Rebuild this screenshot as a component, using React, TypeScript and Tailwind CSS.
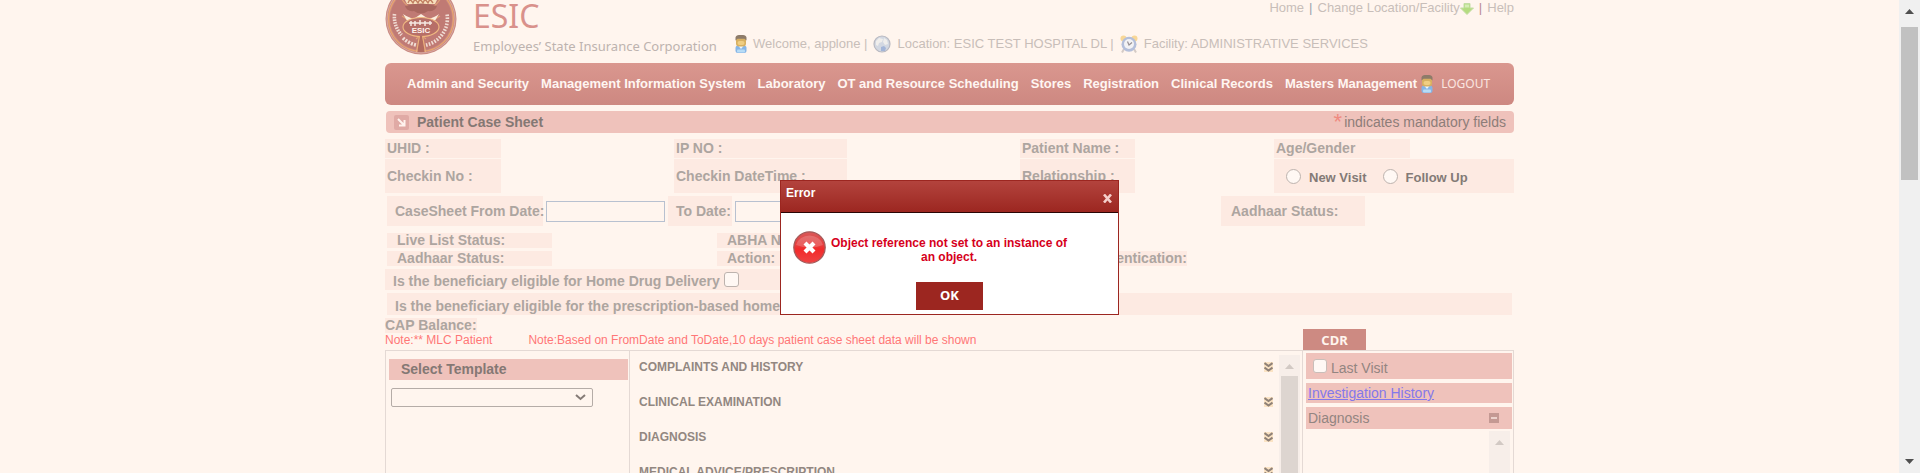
import React from "react";

function Emblem() {
  return (
    <svg className="block h-[55px] w-[72px] shrink-0" viewBox="0 17 72 55" aria-label="ESIC emblem" role="img">
      <circle cx="36" cy="36" r="35.5" fill="#c98a82" />
      <circle cx="36" cy="36" r="34" fill="none" stroke="#d9a79f" strokeWidth="1" />
      <circle cx="36" cy="36" r="32.4" fill="none" stroke="#e9a56e" strokeWidth="1.2" />
      <circle cx="36" cy="36" r="31" fill="#c07a74" />
      <g fill="none" stroke="#f0dcd4" strokeWidth="3.6">
        <path d="M9.5 31 a27 27 0 0 0 7 21" strokeDasharray="1.6 1.1" />
        <path d="M18 55 a27 27 0 0 0 13 7" strokeDasharray="2 1.2" />
        <path d="M41 62 a27 27 0 0 0 21 -31" strokeDasharray="1.6 1.4" />
      </g>
      <path d="M16 15 q7 11 12 9 q8 -4 16 0 q5 2 12 -9 M17 33 q8 6 19 6 t19 -6 M31 56 q5 -5 10 0" fill="none" stroke="#e0a074" strokeWidth="1.2" />
      <path d="M19 15 h34 l-3 6 h-28z" fill="#f7e0bd" />
      <path d="M23 20 l2 -4 3 4 2 -4 3 4 2 -4 3 4 2 -4 3 4 2 -4 3 4" fill="none" stroke="#c28062" strokeWidth="1.4" />
      <path d="M20 23 q16 -5 32 0 q-2 6 -9 5 q-7 5 -14 0 q-7 1 -9 -5z" fill="#a9675f" />
      <path d="M18 31 q7 5 12 4 l6 -4 6 4 q6 1 12 -4 l-6 10 h-24z" fill="#fbeedd" />
      <ellipse cx="36" cy="44" rx="18" ry="9.5" fill="#b76f68" stroke="#f0b980" strokeWidth="1.1" />
      <path d="M24 40 h23 M26 38 v5 M30 38 v5 M35 37 v5 M40 38 v5 M45 38 v4" stroke="#f6e9e2" strokeWidth="1.5" fill="none" />
      <text x="36" y="49.5" textAnchor="middle" fill="#fff3ec" fontFamily="Liberation Sans, sans-serif" fontWeight="700" fontSize="8">ESIC</text>
      <path d="M34.5 53 h3 l2 16 h-7z" fill="#b36b60" />
      <path d="M34.5 53 l-3 16 M37.5 53 l3 16" stroke="#ecb07a" strokeWidth="1.2" />
    </svg>
  );
}

function UserIcon() {
  return (
    <svg className="h-[18px] w-3 shrink-0" viewBox="0 0 12 18" aria-hidden="true">
      <rect x="0.5" y="10.5" width="11" height="7.5" rx="2.5" fill="#86b5e6" />
      <path d="M3.5 11 L6 14 L8.500 11z" fill="#eef6fc" />
      <rect x="2" y="14.500" width="8" height="3" rx="1" fill="#b7dcf6" />
      <rect x="1" y="1.500" width="10" height="10" rx="3" fill="#d8b061" />
      <rect x="2.500" y="6" width="7" height="4" rx="2" fill="#f0ce82" />
      <path d="M0.5 5.500 V2.500 Q1 0 4 0 H8 Q11 0 11.500 2.500 V5.500 L9.500 3.800 H2.500z" fill="#8d7b69" />
    </svg>
  );
}

function GlobeIcon() {
  return (
    <svg className="h-[18px] w-[18px] shrink-0" viewBox="0 0 18 18" aria-hidden="true">
      <circle cx="9" cy="9" r="8" fill="#d3d8e2" stroke="#b9b9c1" strokeWidth="1.2" />
      <path d="M3 6 l3 -3 4 1 -1 3 -3 1 -1 3 -2 -1z M11 3 l3 2 1 4 -3 1 -2 -3z" fill="#f0eeec" />
      <path d="M8 12 l3 -1 2 2 -1 3 -4 0z" fill="#a3b5d8" />
    </svg>
  );
}

function ClockIcon() {
  return (
    <svg className="h-[18px] w-[18px] shrink-0" viewBox="0 0 18 18" aria-hidden="true">
      <circle cx="3.500" cy="3.500" r="3" fill="#f8d797" />
      <circle cx="14.500" cy="3.500" r="3" fill="#f8d797" />
      <path d="M4 14 l-2 3.500 M14 14 l2 3.500" stroke="#d5cbc6" strokeWidth="2" />
      <circle cx="9" cy="9.300" r="7.500" fill="#b4bfda" />
      <circle cx="9" cy="9" r="5" fill="#f2f2f4" />
      <path d="M7.500 6.500 L9 10 L12 7.500" fill="none" stroke="#968f94" strokeWidth="1.200" />
    </svg>
  );
}

function DownArrowIcon() {
  return (
    <svg className="mt-0.5 h-3 w-3.5 shrink-0" viewBox="0 0 14 12" aria-hidden="true">
      <path d="M4 0.5 h6 v4.500 h3.500 L7 11.500 L0.5 5 H4z" fill="#b5dc80" stroke="#c4dda5" />
      <path d="M5 1.500 h4 v3 h-4z" fill="#d6edb6" />
    </svg>
  );
}

function DoubleChevron() {
  return (
    <svg className="mt-0.5 h-2.5 w-[9px]" viewBox="0 0 9 10" aria-hidden="true">
      <rect width="9" height="10" fill="#fbe3c4" />
      <path d="M0.500 1 L4.500 4 L8.500 1 M0.500 5.500 L4.500 8.500 L8.500 5.500" fill="none" stroke="#8f8177" strokeWidth="2" />
    </svg>
  );
}

function Triangle({ down = false, fill }: { down?: boolean; fill: string }) {
  return (
    <svg className="h-[5px] w-[9px] shrink-0" viewBox="0 0 9 5" aria-hidden="true">
      <path d={down ? "M0 0 H9 L4.500 5z" : "M0 5 H9 L4.500 0z"} fill={fill} />
    </svg>
  );
}

const menu = [
  "Admin and Security",
  "Management Information System",
  "Laboratory",
  "OT and Resource Scheduling",
  "Stores",
  "Registration",
  "Clinical Records",
  "Masters Management",
];

const sections = ["COMPLAINTS AND HISTORY", "CLINICAL EXAMINATION", "DIAGNOSIS", "MEDICAL ADVICE/PRESCRIPTION"];

const cell = "bg-[#fdeae2] text-[14px] font-bold text-[#ada5a0] whitespace-nowrap";

function Header() {
  return (
    <header className="flex h-[63px] items-start">
      <Emblem />
      <div className="ml-4 w-[258px] shrink-0">
        <div className="h-8 font-['Noto_Sans',sans-serif] text-[32px] leading-8 text-[#d9918b]">ESIC</div>
        <div className="mt-1.5 font-['Noto_Sans',sans-serif] text-[13px] leading-4 whitespace-nowrap text-[#bdb3af]">
          Employees’ State Insurance Corporation
        </div>
      </div>
      <div className="flex min-w-0 flex-1 flex-col text-[13px] leading-4 whitespace-nowrap text-[#c8beb9]">
        <div className="flex h-[15px] items-center justify-end gap-[5px]">
          <a href="#home">Home</a>
          <span className="text-[#9aa3ad]">|</span>
          <a href="#location" className="flex items-center">
            Change Location/Facility
            <DownArrowIcon />
          </a>
          <span className="text-[#b98a95]">|</span>
          <a href="#help">Help</a>
        </div>
        <div className="mt-5 flex items-center gap-[6px] pl-1">
          <UserIcon />
          <span>Welcome, applone |</span>
          <GlobeIcon />
          <span>Location: ESIC TEST HOSPITAL DL |</span>
          <ClockIcon />
          <span>Facility: ADMINISTRATIVE SERVICES</span>
        </div>
      </div>
    </header>
  );
}

function Nav() {
  return (
    <nav className="flex h-[42px] items-center rounded-md bg-linear-to-b from-[#da978f] to-[#cd8881] px-[22px] text-[13px] font-bold whitespace-nowrap text-[#fff6f2]">
      <div className="flex gap-3">
        {menu.map((m) => (
          <a key={m} href="#menu">{m}</a>
        ))}
      </div>
      <a href="#logout" className="ml-1 flex items-center gap-2 font-['Noto_Sans',sans-serif] text-[12px] font-normal text-[#fbe6e0]">
        <UserIcon />
        LOGOUT
      </a>
    </nav>
  );
}

function PatientForm() {
  return (
    <form>
      <div className="mt-[6px] grid grid-cols-[289fr_346fr_254fr_240fr] gap-y-px">
        <div className={`${cell} w-[116px] pl-[2px] leading-[19px]`}>UHID :</div>
        <div className={`${cell} w-[173px] pl-[2px] leading-[19px]`}>IP NO :</div>
        <div className={`${cell} w-[115px] pl-[2px] leading-[19px]`}>Patient Name :</div>
        <div className={`${cell} w-[136px] pl-[2px] leading-[19px]`}>Age/Gender</div>
        <div className={`${cell} w-[116px] pl-[2px] leading-[34px]`}>Checkin No :</div>
        <div className={`${cell} w-[173px] pl-[2px] leading-[34px]`}>Checkin DateTime :</div>
        <div className={`${cell} w-[115px] pl-[2px] leading-[34px]`}>Relationship :</div>
        <div className="flex items-center bg-[#fdeae2] pl-3 text-[13px] font-bold whitespace-nowrap text-[#837a76]">
          <label className="flex items-center gap-2">
            <input type="radio" name="visit" className="size-[15px] appearance-none rounded-full border border-[#bdb3ae] bg-[#fff8f4]" />
            <span className="pt-1">New Visit</span>
          </label>
          <label className="ml-4 flex items-center gap-2">
            <input type="radio" name="visit" className="size-[15px] appearance-none rounded-full border border-[#bdb3ae] bg-[#fff8f4]" />
            <span className="pt-1">Follow Up</span>
          </label>
        </div>
      </div>

      <div className="mt-[3px] ml-[2px] flex h-[30px] items-center gap-[3px]">
        <label htmlFor="from" className={`${cell} w-[156px] pl-2 leading-[30px]`}>CaseSheet From Date:</label>
        <input id="from" className="h-[21px] w-[119px] border border-[#b8c1d0] bg-[#fff5ee] px-1 text-sm" />
        <label htmlFor="to" className={`${cell} w-16 pl-2 leading-[30px]`}>To Date:</label>
        <input id="to" className="h-[21px] w-[119px] border border-[#b8c1d0] bg-[#fff5ee] px-1 text-sm" />
        <div className={`${cell} mr-[149px] ml-auto w-36 pl-2.5 leading-[30px]`}>Aadhaar Status:</div>
      </div>

      <div className="mt-[7px] ml-[2px] grid grid-cols-[330fr_300fr_497fr] gap-y-[3px]">
        <div className={`${cell} w-[165px] pl-2.5 leading-[15px]`}>Live List Status:</div>
        <div className={`${cell} w-[165px] pl-2.5 leading-[15px]`}>ABHA Number:</div>
        <div />
        <div className={`${cell} w-[165px] pl-2.5 leading-[15px]`}>Aadhaar Status:</div>
        <div className={`${cell} w-[165px] pl-2.5 leading-[15px]`}>Action:</div>
        <div className={`${cell} w-[170px] text-right leading-[15px]`}>Authentication:</div>
      </div>

      <label className={`${cell} mt-[3px] flex h-[21px] w-1/2 items-center gap-1 pl-2`}>
        <span className="pt-1">Is the beneficiary eligible for Home Drug Delivery</span>
        <input type="checkbox" className="size-[15px] appearance-none rounded-[3px] border border-[#bdb3ae] bg-[#fff8f4]" />
      </label>
      <div className={`${cell} mx-[2px] mt-[3px] h-[22px] pt-[2px] pl-2 leading-[22px]`}>
        Is the beneficiary eligible for the prescription-based home service
      </div>
    </form>
  );
}

function Workspace() {
  return (
    <section className="flex min-h-0 flex-1 flex-col">
      <div className="mt-[3px] flex items-end">
        <div className="h-8 flex-1">
          <div className={`${cell} w-[92px] leading-[15px]`}>CAP Balance:</div>
          <div className="flex gap-9 text-[12px] leading-[14px] whitespace-nowrap text-[#ff7777]">
            <span>Note:** MLC Patient</span>
            <span>Note:Based on FromDate and ToDate,10 days patient case sheet data will be shown</span>
          </div>
        </div>
        <div className="mt-[11px] mr-[148px] -mb-px h-[22px] w-[63px] bg-[#cd8a82] text-center font-['Noto_Sans',sans-serif] text-[13px] leading-[22px] font-bold text-[#fff5ee]">
          CDR
        </div>
      </div>
      <div className="flex min-h-0 flex-1 overflow-hidden border border-b-0 border-[#e4d9d4]">
        <div className="w-[244px] shrink-0 border-r border-[#e4d9d4] pt-2 pl-[3px]">
          <label htmlFor="tpl" className="mr-px block h-[21px] bg-[#efc2bb] pl-3 text-[14px] leading-[21px] font-bold text-[#847874]">
            Select Template
          </label>
          <div className="relative mt-2 ml-[2px] w-[202px]">
            <select id="tpl" className="block h-[19px] w-full appearance-none rounded-xs border border-[#b5aca7] bg-[#fff5ee]" />
            <svg className="pointer-events-none absolute top-1.5 right-[7px] h-[7px] w-[11px]" viewBox="0 0 11 7" aria-hidden="true">
              <path d="M1 1 L5.500 5 L10 1" fill="none" stroke="#857b76" strokeWidth="2" />
            </svg>
          </div>
        </div>
        <div className="flex min-w-0 flex-1 pt-1 pr-[2px]">
          <div className="min-w-0 flex-1">
            {sections.map((s) => (
              <button key={s} type="button" className="flex h-[35px] w-full items-start justify-between pt-[5px] pr-1.5 pl-[9px] text-[12px] leading-3 font-bold text-[#928781]">
                <span className="pt-px">{s}</span>
                <DoubleChevron />
              </button>
            ))}
          </div>
          <div className="flex w-[21px] flex-col items-center bg-[#f7eee9] pt-[9px]">
            <Triangle fill="#d2c9c4" />
            <div className="mt-[7px] w-[17px] flex-1 bg-[#ddd5d0]" />
          </div>
        </div>
        <div className="flex w-[211px] shrink-0 flex-col border-l border-[#e4d9d4] pt-[2px] pr-px pl-[3px] text-[14px] text-[#938581]">
          <label className="flex h-[26px] items-center gap-1 bg-[#efc2bb] pl-[7px]">
            <input type="checkbox" className="size-[14px] appearance-none rounded-[3px] border border-[#c9beb9] bg-[#fff8f4]" />
            <span className="pt-1">Last Visit</span>
          </label>
          <a href="#history" className="mt-1 block h-5 bg-[#efc2bb] pl-[2px] leading-5 text-[#8478ea] underline">Investigation History</a>
          <div className="mt-1 flex h-[22px] items-center justify-between bg-[#efc2bb] pr-[13px] pl-[2px]">
            Diagnosis
            <button type="button" aria-label="Collapse" className="flex size-[10px] items-center justify-center bg-[#c49993]">
              <span className="block h-[2px] w-1.5 bg-[#ecd2cc]" />
            </button>
          </div>
          <div className="mt-[2px] mr-[2px] flex w-[21px] flex-1 flex-col items-center self-end bg-[#f7eee9] pt-[9px]">
            <Triangle fill="#d2c9c4" />
          </div>
        </div>
      </div>
    </section>
  );
}

function ErrorDialog() {
  return (
    <div className="absolute inset-0 flex items-start justify-center pt-[180px]">
      <div role="alertdialog" aria-label="Error" className="w-[339px] border border-[#9c2620] bg-white">
        <div className="flex h-8 justify-between border-b border-[#2a0505] bg-linear-to-b from-[#b3433d] to-[#9c2620] pr-1.5 pl-[5px] text-[12px] font-bold text-white">
          <span className="pt-1 leading-4">Error</span>
          <button type="button" aria-label="Close" className="pt-1">
            <svg className="h-[9px] w-[9px]" viewBox="0 0 9 9" aria-hidden="true">
              <path d="M1 0.500 L8 8.500 M8 0.500 L1 8.500" stroke="#f5cfcb" strokeWidth="2.600" />
            </svg>
          </button>
        </div>
        <div className="flex items-start pt-[18px] pl-3">
          <svg className="h-[33px] w-[33px] shrink-0" viewBox="0 0 33 33" aria-hidden="true">
            <defs>
              <linearGradient id="ball" x1="0" y1="0" x2="0" y2="1">
                <stop offset="0" stopColor="#d85a5a" />
                <stop offset="0.450" stopColor="#e83a3a" />
                <stop offset="0.550" stopColor="#f22a2a" />
                <stop offset="1" stopColor="#ee4444" />
              </linearGradient>
            </defs>
            <circle cx="16.500" cy="16.500" r="15.700" fill="url(#ball)" stroke="#a35b5b" strokeWidth="1.300" />
            <path d="M3 14 a14 13 0 0 1 27 0 q-13 5 -27 0z" fill="#ffffff" opacity="0.180" />
            <path d="M12 12 L21 21 M21 12 L12 21" stroke="#ffffff" strokeWidth="4.200" />
          </svg>
          <p className="w-[246px] pt-[5px] text-center text-[12px] leading-[14px] font-bold text-[#d6001c]">
            Object reference not set to an instance of an object.
          </p>
        </div>
        <div className="mt-[18px] mb-1 flex justify-center">
          <button type="button" className="h-7 w-[67px] bg-[#9c2620] font-['Noto_Sans',sans-serif] text-[13px] font-bold text-white">OK</button>
        </div>
      </div>
    </div>
  );
}

export default function App() {
  return (
    <div className="flex h-screen overflow-hidden bg-[#fff5ee] font-['Liberation_Sans',Arial,sans-serif]">
      <div className="relative flex min-w-0 flex-1 justify-center overflow-hidden">
        <main className="flex w-full max-w-[1129px] flex-col">
          <Header />
          <Nav />
          <div className="mt-1.5 ml-px flex h-[22px] shrink-0 items-center rounded-[4px] bg-[#efc2bb] px-2 text-[#847874]">
            <svg className="h-[15px] w-[15px]" viewBox="0 0 15 15" aria-hidden="true">
              <rect width="15" height="15" rx="2" fill="#e0aaa5" />
              <path d="M4 4 L10 10 M10.500 5 V10.500 H5" fill="none" stroke="#fff3ee" strokeWidth="2" />
            </svg>
            <h1 className="ml-2 text-[14px] font-bold">Patient Case Sheet</h1>
            <span className="ml-auto flex items-center text-[14px] text-[#8d7d79]">
              <span className="mr-0.5 text-[22px] leading-5 text-[#f08a80]">*</span>
              indicates mandatory fields
            </span>
          </div>
          <PatientForm />
          <Workspace />
        </main>
        <ErrorDialog />
      </div>
      <div className="flex w-[21px] shrink-0 flex-col items-center bg-[#f0f0f0] py-[9px]">
        <Triangle fill="#4f4f4f" />
        <div className="mt-[13px] h-[153px] w-[17px] bg-[#c1c1c1]" />
        <div className="mt-auto flex"><Triangle down fill="#4f4f4f" /></div>
      </div>
    </div>
  );
}
